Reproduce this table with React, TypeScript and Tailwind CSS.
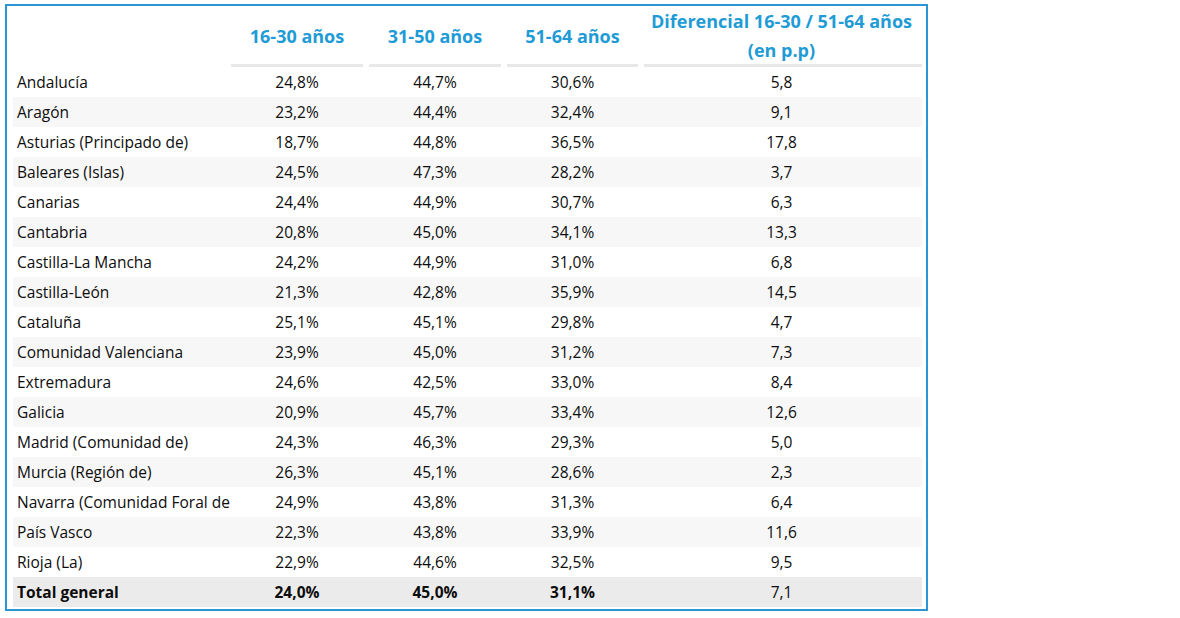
const rows: [string, string, string, string, string][] = [
  ["Andalucía", "24,8%", "44,7%", "30,6%", "5,8"],
  ["Aragón", "23,2%", "44,4%", "32,4%", "9,1"],
  ["Asturias (Principado de)", "18,7%", "44,8%", "36,5%", "17,8"],
  ["Baleares (Islas)", "24,5%", "47,3%", "28,2%", "3,7"],
  ["Canarias", "24,4%", "44,9%", "30,7%", "6,3"],
  ["Cantabria", "20,8%", "45,0%", "34,1%", "13,3"],
  ["Castilla-La Mancha", "24,2%", "44,9%", "31,0%", "6,8"],
  ["Castilla-León", "21,3%", "42,8%", "35,9%", "14,5"],
  ["Cataluña", "25,1%", "45,1%", "29,8%", "4,7"],
  ["Comunidad Valenciana", "23,9%", "45,0%", "31,2%", "7,3"],
  ["Extremadura", "24,6%", "42,5%", "33,0%", "8,4"],
  ["Galicia", "20,9%", "45,7%", "33,4%", "12,6"],
  ["Madrid (Comunidad de)", "24,3%", "46,3%", "29,3%", "5,0"],
  ["Murcia (Región de)", "26,3%", "45,1%", "28,6%", "2,3"],
  ["Navarra (Comunidad Foral de", "24,9%", "43,8%", "31,3%", "6,4"],
  ["País Vasco", "22,3%", "43,8%", "33,9%", "11,6"],
  ["Rioja (La)", "22,9%", "44,6%", "32,5%", "9,5"],
];

const grid = "grid grid-cols-[215px_138px_138px_137px_281px]";

function HeaderCell({ children, last }: { children: React.ReactNode; last?: boolean }) {
  return (
    <div className="flex flex-col">
      <div className="h-[58px] pt-[2px] flex items-center justify-center text-center text-[18px] font-bold leading-[29px] text-[#1f9bd6]">
        {children}
      </div>
      <div className={`h-[3px] bg-[#e8e8e8] ${last ? "ml-[3px]" : "mx-[3px]"}`} />
    </div>
  );
}

export default function App() {
  return (
    <div className="w-[1180px] h-[618px] bg-white pt-[4px] pl-[5px]" style={{ fontFamily: '"Open Sans", "Noto Sans", sans-serif' }}>
      <div className="w-[923px] h-[607px] border-2 border-[#2b96d3] pl-[6px] pr-[4px] text-[15.5px] text-[#0d0d0d]">
        <div className={grid}>
          <div />
          <HeaderCell>16-30 años</HeaderCell>
          <HeaderCell>31-50 años</HeaderCell>
          <HeaderCell>51-64 años</HeaderCell>
          <HeaderCell last>
            <span>
              Diferencial 16-30 / 51-64 años
              <br />
              (en p.p)
            </span>
          </HeaderCell>
        </div>

        {rows.map((r, idx) => (
          <div key={idx} className={`${grid} h-[30px] pt-[2px] items-center ${idx % 2 === 1 ? "bg-[#f7f7f7]" : ""}`}>
            <div className="pl-[4px] whitespace-nowrap">{r[0]}</div>
            <div className="text-center">{r[1]}</div>
            <div className="text-center">{r[2]}</div>
            <div className="text-center">{r[3]}</div>
            <div className="text-center">{r[4]}</div>
          </div>
        ))}

        {/* Total row */}
        <div className={`${grid} h-[30px] pt-[2px] items-center bg-[#ebebeb]`}>
          <div className="pl-[4px] font-bold">Total general</div>
          <div className="text-center font-bold">24,0%</div>
          <div className="text-center font-bold">45,0%</div>
          <div className="text-center font-bold">31,1%</div>
          <div className="text-center">7,1</div>
        </div>
      </div>
    </div>
  );
}
